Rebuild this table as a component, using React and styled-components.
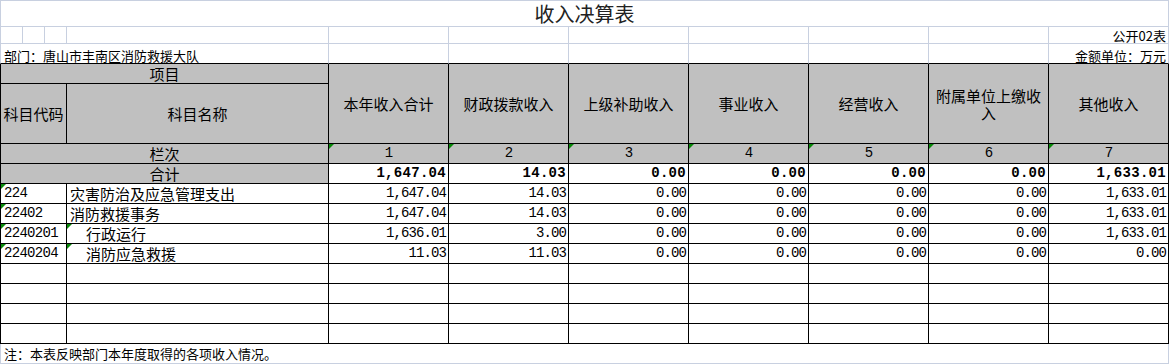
import React from "react";
import styled, { createGlobalStyle, css } from "styled-components";

const GRID = "#c8d0e0";
const INK = "#000";
const HEAD = "#c0c0c0";
const CJK = `"Noto Sans CJK SC", "Noto Sans", sans-serif`;
const MONO = `"Liberation Mono", "Noto Sans CJK SC", monospace`;

const Global = createGlobalStyle`
  html, body { margin: 0; padding: 0; background: #fff; }
  body { font-family: ${CJK}; color: #000; }
`;

const Sheet = styled.div`
  display: grid;
  grid-template-columns: 23px 22px 22px 262px repeat(7, 120px);
  grid-template-rows: 27px 17px 20px 20px 60px repeat(11, 20px);
  width: 1169px;
  height: 364px;
  overflow: hidden;
`;

const Cell = styled.div`
  box-sizing: border-box;
  position: relative;
  display: flex;
  min-width: 0;
  overflow: hidden;
  white-space: nowrap;
  grid-column: span ${(p) => p.$span || 1};
  ${(p) => p.$rows && css`grid-row: span ${p.$rows};`}
  border-right: 1px solid ${(p) => p.$r || INK};
  border-bottom: 1px solid ${(p) => p.$b || INK};
  ${(p) => p.$l && css`border-left: 1px solid ${p.$l};`}
  ${(p) => p.$t && css`border-top: 1px solid ${p.$t};`}
  background: ${(p) => (p.$head ? HEAD : "#fff")};
  justify-content: ${(p) =>
    p.$align === "right" ? "flex-end" : p.$align === "center" ? "center" : "flex-start"};
  align-items: ${(p) => (p.$valign === "center" ? "center" : "flex-end")};
  padding: 0 ${(p) => (p.$align === "right" ? 2 : 3)}px ${(p) => p.$pb || 0}px
    ${(p) => 3 + (p.$indent || 0)}px;
  font-size: ${(p) => p.$size || 15}px;
  line-height: ${(p) => (p.$size === 13 ? 15 : 18)}px;
  ${(p) =>
    p.$tri &&
    css`
      &::before {
        content: "";
        position: absolute;
        left: 0;
        top: 0;
        border-style: solid;
        border-width: 5px 5px 0 0;
        border-color: #0a8a0a transparent transparent transparent;
      }
    `}
`;

const Title = styled(Cell)`
  font-size: 20px;
  line-height: 24px;
  color: #222;
  padding-bottom: 0;
`;

const Num = styled(Cell)`
  font-family: ${MONO};
  font-size: 14px;
  letter-spacing: ${(p) => (p.$bold ? "0.3px" : "-0.9px")};
  font-weight: ${(p) => (p.$bold ? 700 : 400)};
  padding-bottom: 1px;
`;

const Code = styled(Cell)`
  font-family: ${MONO};
  font-size: 14px;
  letter-spacing: -0.7px;
  padding-bottom: 1px;
`;

const HeadText = styled.span`
  white-space: normal;
  text-align: center;
  line-height: 17px;
  width: 105px;
`;

const heads = ["本年收入合计", "财政拨款收入", "上级补助收入", "事业收入", "经营收入", "附属单位上缴收入", "其他收入"];

const rows = [
  { code: "224", name: "灾害防治及应急管理支出", vals: ["1,647.04", "14.03", "0.00", "0.00", "0.00", "0.00", "1,633.01"] },
  { code: "22402", name: "消防救援事务", vals: ["1,647.04", "14.03", "0.00", "0.00", "0.00", "0.00", "1,633.01"] },
  { code: "2240201", name: "行政运行", sub: true, vals: ["1,636.01", "3.00", "0.00", "0.00", "0.00", "0.00", "1,633.01"] },
  { code: "2240204", name: "消防应急救援", sub: true, vals: ["11.03", "11.03", "0.00", "0.00", "0.00", "0.00", "0.00"] },
];

const totals = ["1,647.04", "14.03", "0.00", "0.00", "0.00", "0.00", "1,633.01"];

export default function App() {
  return (
    <>
      <Global />
      <Sheet>
        <Title $span={11} $l={GRID} $t={GRID} $r={GRID} $b={GRID} $align="center">
          收入决算表
        </Title>

        {Array.from({ length: 10 }).map((_, i) => (
          <Cell key={"r2" + i} $l={i === 0 ? GRID : undefined} $r={GRID} $b={GRID} />
        ))}
        <Cell $r={GRID} $b={GRID} $align="right" $size={13}>
          公开02表
        </Cell>

        <Cell $span={4} $l={GRID} $r={GRID} $size={13}>
          部门：唐山市丰南区消防救援大队
        </Cell>
        {Array.from({ length: 6 }).map((_, i) => (
          <Cell key={"r3" + i} $r={GRID} />
        ))}
        <Cell $r={GRID} $align="right" $size={13}>
          金额单位：万元
        </Cell>

        <Cell $span={4} $l={INK} $head $align="center">
          项目
        </Cell>
        {heads.map((h) => (
          <Cell key={h} $rows={2} $head $align="center" $valign="center">
            <HeadText>{h}</HeadText>
          </Cell>
        ))}
        <Cell $span={3} $l={INK} $head $align="center" $valign="center">
          科目代码
        </Cell>
        <Cell $head $align="center" $valign="center">
          科目名称
        </Cell>

        <Cell $span={4} $l={INK} $head $align="center">
          栏次
        </Cell>
        {[1, 2, 3, 4, 5, 6, 7].map((n) => (
          <Num key={"c" + n} $head $tri $align="center">
            {n}
          </Num>
        ))}

        <Cell $span={4} $l={INK} $head $align="center">
          合计
        </Cell>
        {totals.map((v, i) => (
          <Num key={"t" + i} $bold $align="right">
            {v}
          </Num>
        ))}

        {rows.map((r) => (
          <React.Fragment key={r.code}>
            <Code $span={3} $l={INK} $tri>
              {r.code}
            </Code>
            <Cell $tri={r.sub} $indent={r.sub ? 16 : 0}>
              {r.name}
            </Cell>
            {r.vals.map((v, i) => (
              <Num key={i} $align="right">
                {v}
              </Num>
            ))}
          </React.Fragment>
        ))}

        {[0, 1, 2, 3].map((k) => (
          <React.Fragment key={"e" + k}>
            <Cell $span={3} $l={INK} />
            <Cell />
            {Array.from({ length: 7 }).map((_, i) => (
              <Cell key={i} />
            ))}
          </React.Fragment>
        ))}

        <Cell $span={11} $l={GRID} $r={GRID} $b={GRID} $size={13} $pb={2}>
          注：本表反映部门本年度取得的各项收入情况。
        </Cell>
      </Sheet>
    </>
  );
}
